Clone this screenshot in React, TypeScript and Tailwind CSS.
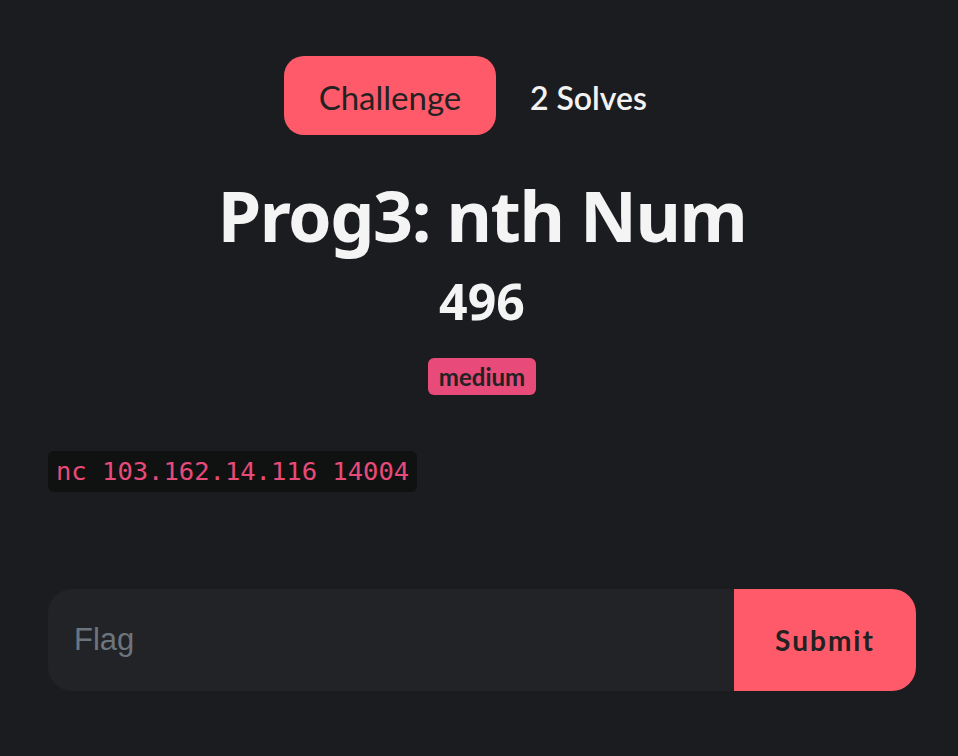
const App = () => {
  return (
    <div className="min-h-[756px] bg-[#1b1c1f] pt-[56px]">
      <div className="ml-[48px] w-[868px]">
        <div className="flex justify-center items-center gap-[34px] pr-[33px]" style={{ fontFamily: "Lato, sans-serif" }}>
          <div className="h-[79px] w-[212px] rounded-[20px] bg-[#ff5a6a] flex items-center justify-center pt-[5px] text-[33px] text-[#222222]">
            Challenge
          </div>
          <div className="pt-[5px] text-[32px] font-semibold text-[#f2f2f2]">2 Solves</div>
        </div>

        <h1 className="mt-[40px] text-center text-[70px] leading-[80px] font-bold tracking-[-1.5px] text-[#f4f4f4]" style={{ fontFamily: "'Noto Sans', sans-serif" }}>
          Prog3: nth Num
        </h1>
        <div className="mt-[18px] text-center text-[50px] leading-[56px] font-bold text-[#f4f4f4]" style={{ fontFamily: "'Noto Sans', sans-serif" }}>
          496
        </div>
        <div className="mt-[29px] flex justify-center">
          <span className="h-[37px] px-[11px] rounded-[6px] bg-[#e84a7a] text-[#222222] text-[24px] font-bold leading-[37px]" style={{ fontFamily: "Lato, sans-serif" }}>
            medium
          </span>
        </div>

        <div className="mt-[56px]">
          <code className="inline-block rounded-[6px] bg-[#101211] px-[8px] h-[41px] leading-[41px] text-[25.5px] text-[#e84a7a]" style={{ fontFamily: "'DejaVu Sans Mono', monospace" }}>
            nc 103.162.14.116 14004
          </code>
        </div>

        <form className="mt-[97px] flex h-[102px]" onSubmit={(e) => e.preventDefault()}>
          <input
            placeholder="Flag"
            className="flex-1 rounded-l-[24px] bg-[#222326] px-[26px] text-[31px] text-[#dddddd] placeholder:text-[#6c757d] outline-none"
            style={{ fontFamily: "'Liberation Sans', Arial, sans-serif" }}
          />
          <button
            type="submit"
            className="w-[182px] rounded-r-[24px] bg-[#ff5a6a] text-[28px] font-bold tracking-[2px] text-[#222222]"
            style={{ fontFamily: "Lato, sans-serif" }}
          >
            Submit
          </button>
        </form>
      </div>
    </div>
  );
};

export default App;
